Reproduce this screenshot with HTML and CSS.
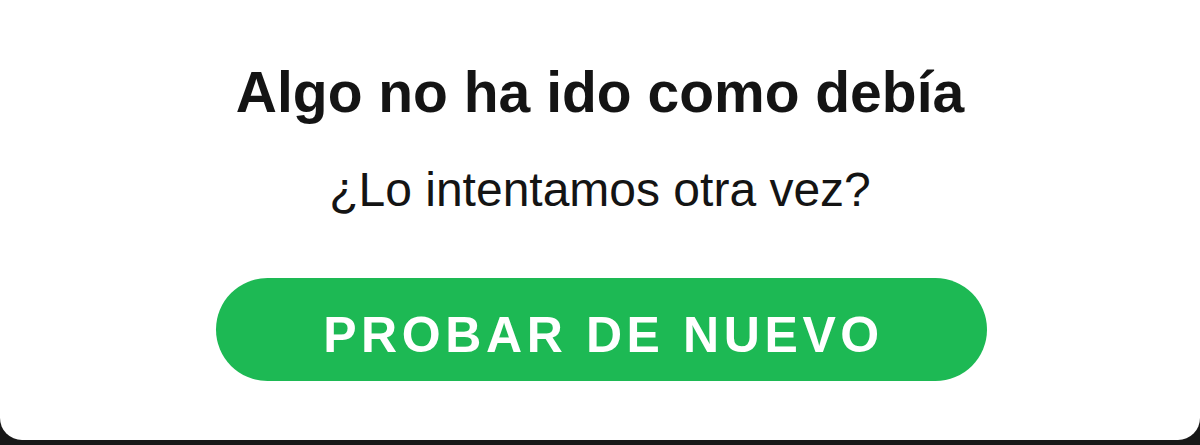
FILE: index.html
```html
<!DOCTYPE html>
<html lang="es">
<head>
    <meta charset="UTF-8">
    <meta name="viewport" content="width=device-width, initial-scale=1.0">
    <title>Error</title>
    <link rel="stylesheet" href="styles.css">
</head>
<body>
    <div class="card">
        <h1 class="title">Algo no ha ido como debía</h1>
        <p class="subtitle">¿Lo intentamos otra vez?</p>
        <button class="btn">PROBAR DE NUEVO</button>
    </div>
</body>
</html>
```

FILE: styles.css
```css
body {
    margin: 0;
    background: #181818;
    font-family: "Liberation Sans", Arial, sans-serif;
    height: 445px;
    overflow: hidden;
}

.card {
    height: 440px;
    background: #ffffff;
    border-radius: 0 0 22px 22px;
    display: flex;
    flex-direction: column;
    align-items: center;
    box-sizing: border-box;
    padding-top: 57px;
}

.title {
    margin: 0;
    font-size: 57px;
    font-weight: 700;
    color: #141414;
    line-height: 70px;
}

.subtitle {
    margin: 35px 0 0;
    font-size: 48px;
    color: #141414;
    line-height: 56px;
}

.btn {
    margin: 60px 0 0 2px;
    width: 771px;
    height: 103px;
    padding: 10px 0 0 5px;
    border: none;
    border-radius: 52px;
    background: #1db954;
    color: #ffffff;
    font-family: inherit;
    font-size: 50px;
    font-weight: 700;
    letter-spacing: 4.6px;
}
```
